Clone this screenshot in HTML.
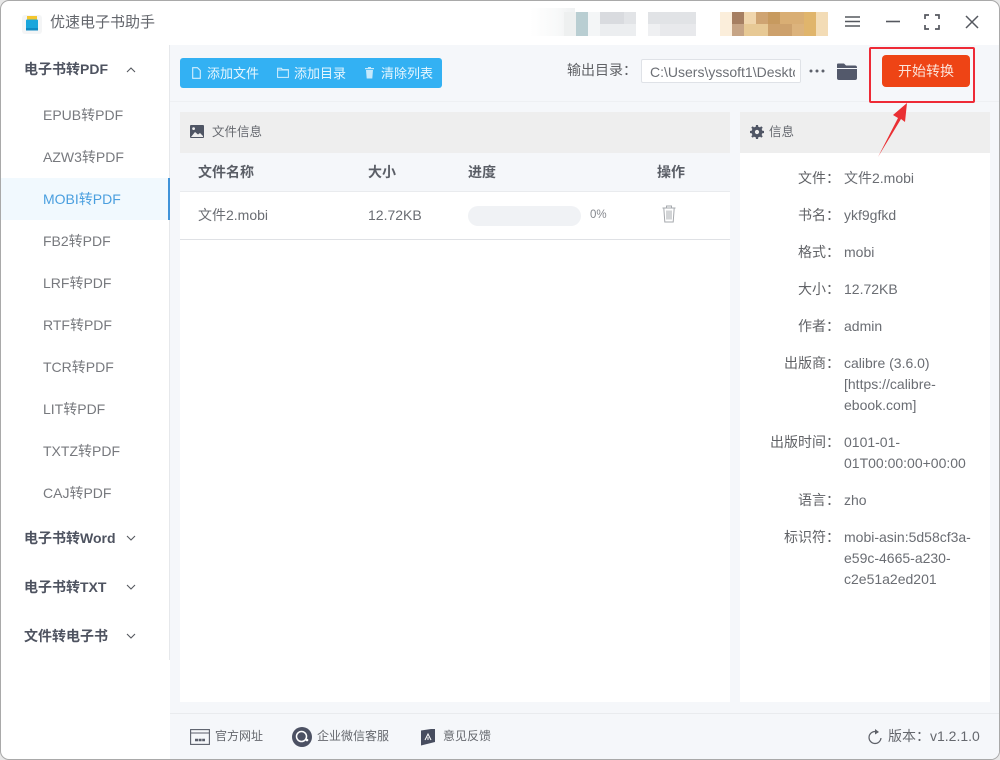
<!DOCTYPE html>
<html lang="zh">
<head>
<meta charset="utf-8">
<title>优速电子书助手</title>
<style>
*{box-sizing:border-box;margin:0;padding:0}
html,body{width:1000px;height:760px;overflow:hidden;background:#e8e8e8}
body{font-family:"Liberation Sans","Noto Sans CJK SC",sans-serif;color:#606266;position:relative}
.a{position:absolute;white-space:nowrap;line-height:1}
.win{position:absolute;left:0;top:0;width:1000px;height:760px;background:#fff;border:1px solid #a9a9a9;border-radius:9px;overflow:hidden}
.box{position:absolute}
.nav{font-size:14px;color:#77797e;left:43px}
.grp{font-size:14px;font-weight:bold;color:#4e5360;left:24px}
.th{font-size:14px;font-weight:bold;color:#5a5e66;top:165px}
.lab{font-size:14px;color:#606266;right:160px;text-align:right}
.val{font-size:14px;color:#6a6d73;left:844px}
svg{position:absolute;overflow:visible}
</style>
</head>
<body>
<div class="win"></div>

<!-- title bar -->
<svg style="left:22px;top:14px" width="20" height="20" viewBox="0 0 20 20">
<rect x="0" y="1" width="20" height="19" rx="3" fill="#f4f5f6"/>
<rect x="5" y="2" width="10" height="4" fill="#f4c62e"/>
<rect x="4" y="5.5" width="12" height="11" rx="1" fill="#1aa6dc"/>
<rect x="4" y="14" width="12" height="2.5" fill="#0f8bc4"/>
</svg>
<div class="a" style="left:50px;top:15px;font-size:15px;color:#63666c">优速电子书助手</div>

<!-- blurred mosaic -->
<div class="box" style="left:530px;top:8px;width:45px;height:28px;background:linear-gradient(90deg,#fff,#f8f9f9 60%,#eff1f2)"></div>
<div class="box" style="left:564px;top:12px;width:12px;height:24px;background:#eef0f0"></div>
<div class="box" style="left:576px;top:12px;width:12px;height:24px;background:#b9ced2"></div>
<div class="box" style="left:588px;top:12px;width:12px;height:24px;background:#f4f6f7"></div>
<div class="box" style="left:600px;top:12px;width:24px;height:12px;background:#d9dbdf"></div>
<div class="box" style="left:624px;top:12px;width:12px;height:12px;background:#e2e4e7"></div>
<div class="box" style="left:600px;top:24px;width:36px;height:12px;background:#eceef0"></div>
<div class="box" style="left:648px;top:12px;width:48px;height:12px;background:#e1e3e6"></div>
<div class="box" style="left:648px;top:24px;width:12px;height:12px;background:#eff0f2"></div>
<div class="box" style="left:660px;top:24px;width:36px;height:12px;background:#e8e9ec"></div>
<div class="box" style="left:720px;top:12px;width:108px;height:24px;background:#fbeedb"></div>
<div class="box" style="left:732px;top:12px;width:12px;height:12px;background:#a67f62"></div>
<div class="box" style="left:732px;top:24px;width:12px;height:12px;background:#c6a485"></div>
<div class="box" style="left:744px;top:12px;width:12px;height:24px;background:#f0d6ad"></div>
<div class="box" style="left:744px;top:24px;width:24px;height:12px;background:#e7c995"></div>
<div class="box" style="left:756px;top:12px;width:24px;height:12px;background:#cfa472"></div>
<div class="box" style="left:768px;top:12px;width:12px;height:12px;background:#c79a5f"></div>
<div class="box" style="left:768px;top:24px;width:24px;height:12px;background:#cda16c"></div>
<div class="box" style="left:780px;top:12px;width:24px;height:12px;background:#d9ae74"></div>
<div class="box" style="left:792px;top:24px;width:12px;height:12px;background:#dcb37c"></div>
<div class="box" style="left:804px;top:12px;width:12px;height:24px;background:#e0b56c"></div>
<div class="box" style="left:816px;top:12px;width:12px;height:24px;background:#f3dcb6"></div>

<!-- window buttons -->
<svg style="left:845px;top:16px" width="16" height="12"><path d="M0 1H15M0 5.5H15M0 10H15" stroke="#55585f" stroke-width="1.4" fill="none"/></svg>
<svg style="left:886px;top:16px" width="14" height="12"><path d="M0 5.5H14" stroke="#55585f" stroke-width="1.6" fill="none"/></svg>
<svg style="left:924px;top:14px" width="16" height="16"><path d="M1 5V1H5M11 1H15V5M15 11V15H11M5 15H1V11" stroke="#55585f" stroke-width="1.7" fill="none"/></svg>
<svg style="left:965px;top:15px" width="14" height="14"><path d="M1 1L13 13M13 1L1 13" stroke="#55585f" stroke-width="1.5" fill="none"/></svg>

<!-- main background -->
<div class="box" style="left:170px;top:45px;width:829px;height:714px;background:#f5f7fa;border-bottom-right-radius:8px"></div>
<div class="box" style="left:170px;top:101px;width:829px;height:1px;background:#eef0f3"></div>
<div class="box" style="left:169px;top:45px;width:1px;height:615px;background:#e6e8eb"></div>

<!-- sidebar -->
<div class="a grp" style="top:62px">电子书转PDF</div>
<svg style="left:126px;top:67px" width="10" height="6"><path d="M1 5L5 1L9 5" stroke="#55585f" fill="none" stroke-width="1.1"/></svg>
<div class="a nav" style="top:108px">EPUB转PDF</div>
<div class="a nav" style="top:150px">AZW3转PDF</div>
<div class="box" style="left:1px;top:178px;width:169px;height:42px;background:#f1f9fe;border-right:2px solid #3f93d9"></div>
<div class="a nav" style="top:192px;color:#4a9fdf">MOBI转PDF</div>
<div class="a nav" style="top:234px">FB2转PDF</div>
<div class="a nav" style="top:276px">LRF转PDF</div>
<div class="a nav" style="top:318px">RTF转PDF</div>
<div class="a nav" style="top:360px">TCR转PDF</div>
<div class="a nav" style="top:402px">LIT转PDF</div>
<div class="a nav" style="top:444px">TXTZ转PDF</div>
<div class="a nav" style="top:486px">CAJ转PDF</div>
<div class="a grp" style="top:531px">电子书转Word</div>
<svg style="left:126px;top:535px" width="10" height="6"><path d="M1 1L5 5L9 1" stroke="#55585f" fill="none" stroke-width="1.1"/></svg>
<div class="a grp" style="top:580px">电子书转TXT</div>
<svg style="left:126px;top:584px" width="10" height="6"><path d="M1 1L5 5L9 1" stroke="#55585f" fill="none" stroke-width="1.1"/></svg>
<div class="a grp" style="top:629px">文件转电子书</div>
<svg style="left:126px;top:633px" width="10" height="6"><path d="M1 1L5 5L9 1" stroke="#55585f" fill="none" stroke-width="1.1"/></svg>

<!-- toolbar -->
<div class="box" style="left:180px;top:58px;width:262px;height:30px;background:#33b1f3;border-radius:3px"></div>
<svg style="left:192px;top:67px" width="9" height="12"><path d="M.7.7H5.5L8.3 3.5V11.3H.7Z" stroke="#d5effd" fill="none" stroke-width="1.1"/></svg>
<div class="a" style="left:207px;top:67px;font-size:13px;color:#e6f6fe">添加文件</div>
<svg style="left:277px;top:67px" width="12" height="11"><path d="M.6 1.2H4.5L5.3 2.6H11.4V10.4H.6Z M.6 3H11" stroke="#d5effd" fill="none" stroke-width="1"/></svg>
<div class="a" style="left:294px;top:67px;font-size:13px;color:#e6f6fe">添加目录</div>
<svg style="left:365px;top:67px" width="9" height="12"><path d="M3 0H6V1H9V2.2H0V1H3ZM1 3H8L7.3 11.5H1.7Z" fill="#c5e9fc"/></svg>
<div class="a" style="left:381px;top:67px;font-size:13px;color:#e6f6fe">清除列表</div>

<div class="a" style="left:567px;top:63px;font-size:14px;color:#606266">输出目录：</div>
<div class="box" style="left:641px;top:59px;width:160px;height:24px;background:#fff;border:1px solid #dfe2e7;border-radius:2px;overflow:hidden">
<div class="a" style="left:8px;top:5px;font-size:14px;color:#6c6f75">C:\Users\yssoft1\Desktop</div>
<div class="box" style="right:0;top:0;width:5px;height:22px;background:#fff"></div>
</div>
<svg style="left:809px;top:69px" width="16" height="4"><circle cx="2" cy="2" r="1.5" fill="#5d616b"/><circle cx="8" cy="2" r="1.5" fill="#5d616b"/><circle cx="14" cy="2" r="1.5" fill="#5d616b"/></svg>
<svg style="left:837px;top:63px" width="20" height="17"><path d="M0 1.5Q0 .5 1 .5H7L9 2.5H18Q20 2.5 20 4.5V5H0Z" fill="#53596b"/><path d="M0 6H20V15Q20 17 18 17H2Q0 17 0 15Z" fill="#53596b"/></svg>

<div class="box" style="left:882px;top:55px;width:88px;height:32px;background:#ee4415;border-radius:4px"></div>
<div class="a" style="left:898px;top:64px;font-size:14px;color:#fbe3d9">开始转换</div>

<!-- left panel -->
<div class="box" style="left:180px;top:112px;width:550px;height:590px;background:#fff"></div>
<div class="box" style="left:180px;top:112px;width:550px;height:41px;background:#eeeeee"></div>
<div class="box" style="left:180px;top:153px;width:550px;height:39px;background:#f5f7fa;border-bottom:1px solid #e9ebee"></div>
<div class="box" style="left:180px;top:239px;width:550px;height:1px;background:#dfe1e5"></div>
<svg style="left:190px;top:125px" width="14" height="13"><rect width="14" height="13" rx="1" fill="#4f5564"/><path d="M1 12L5 7L8 9.5L10 8L13 11V12Z" fill="#eee"/><circle cx="3.6" cy="3.6" r="1.4" fill="#eee"/></svg>
<div class="a" style="left:212px;top:126px;font-size:12.5px;color:#66696f">文件信息</div>
<div class="a th" style="left:198px">文件名称</div>
<div class="a th" style="left:368px">大小</div>
<div class="a th" style="left:468px">进度</div>
<div class="a th" style="left:657px">操作</div>
<div class="a" style="left:198px;top:208px;font-size:14px;color:#6a6d73">文件2.mobi</div>
<div class="a" style="left:368px;top:208px;font-size:14px;color:#6a6d73">12.72KB</div>
<div class="box" style="left:468px;top:206px;width:113px;height:20px;background:#f0f2f5;border-radius:10px"></div>
<div class="a" style="left:590px;top:210px;font-size:11.5px;color:#85888e">0%</div>
<svg style="left:662px;top:205px" width="14" height="18" viewBox="0 0 14 18"><path d="M.5 3H13.5M4.5 3V1H9.5V3M1.8 3L2.8 17H11.2L12.2 3M5 5.5V14.5M7 5.5V14.5M9 5.5V14.5" stroke="#a5a8ad" fill="none" stroke-width="1"/></svg>

<!-- right panel -->
<div class="box" style="left:740px;top:112px;width:250px;height:590px;background:#fff"></div>
<div class="box" style="left:740px;top:112px;width:250px;height:41px;background:#eeeeee"></div>
<svg style="left:750px;top:125px" width="14" height="14" viewBox="0 0 14 14"><circle cx="7" cy="7" r="4" fill="none" stroke="#4f5564" stroke-width="3"/><path d="M7 0V14M0 7H14M2 2L12 12M12 2L2 12" stroke="#4f5564" stroke-width="2.2"/><circle cx="7" cy="7" r="2.1" fill="#eee"/></svg>
<div class="a" style="left:769px;top:126px;font-size:12.5px;color:#66696f">信息</div>

<div class="a lab" style="top:171px">文件：</div><div class="a val" style="top:171px">文件2.mobi</div>
<div class="a lab" style="top:208px">书名：</div><div class="a val" style="top:208px">ykf9gfkd</div>
<div class="a lab" style="top:245px">格式：</div><div class="a val" style="top:245px">mobi</div>
<div class="a lab" style="top:282px">大小：</div><div class="a val" style="top:282px">12.72KB</div>
<div class="a lab" style="top:319px">作者：</div><div class="a val" style="top:319px">admin</div>
<div class="a lab" style="top:356px">出版商：</div>
<div class="a val" style="top:356px">calibre (3.6.0)</div>
<div class="a val" style="top:377px">[https://calibre-</div>
<div class="a val" style="top:398px">ebook.com]</div>
<div class="a lab" style="top:435px">出版时间：</div>
<div class="a val" style="top:435px">0101-01-</div>
<div class="a val" style="top:456px">01T00:00:00+00:00</div>
<div class="a lab" style="top:493px">语言：</div><div class="a val" style="top:493px">zho</div>
<div class="a lab" style="top:530px">标识符：</div>
<div class="a val" style="top:530px">mobi-asin:5d58cf3a-</div>
<div class="a val" style="top:551px">e59c-4665-a230-</div>
<div class="a val" style="top:572px">c2e51a2ed201</div>

<!-- footer -->
<div class="box" style="left:170px;top:713px;width:829px;height:1px;background:#e9ebee"></div>
<svg style="left:190px;top:729px" width="20" height="16"><rect x=".6" y=".6" width="18.8" height="14.8" fill="none" stroke="#5a5e6a" stroke-width="1.1"/><path d="M.6 4H19.4" stroke="#5a5e6a"/><path d="M5 11H15" stroke="#5a5e6a" stroke-width="2.5" stroke-dasharray="3 .6"/></svg>
<div class="a" style="left:215px;top:730px;font-size:12px;color:#65686e">官方网址</div>
<svg style="left:292px;top:727px" width="20" height="20"><circle cx="10" cy="10" r="10" fill="#4c5163"/><circle cx="9.5" cy="9.5" r="5" fill="none" stroke="#fff" stroke-width="1.5"/><circle cx="15" cy="13" r="1.3" fill="#fff"/></svg>
<div class="a" style="left:317px;top:730px;font-size:12px;color:#65686e">企业微信客服</div>
<svg style="left:421px;top:729px" width="14" height="17"><path d="M0 1.5L10 0H14V13L0 16.5Z" fill="#474d5f"/><path d="M4 11L7 5L10 11M7 8V11" stroke="#fff" fill="none"/></svg>
<div class="a" style="left:443px;top:730px;font-size:12px;color:#65686e">意见反馈</div>
<svg style="left:867px;top:729px" width="15" height="16" viewBox="0 0 15 16"><path d="M8 2.5A6 6 0 1 0 14 9" stroke="#5d6068" fill="none" stroke-width="1.2"/><path d="M8 0L12 3L8 5.5Z" fill="#5d6068"/></svg>
<div class="a" style="left:888px;top:729px;font-size:14px;color:#65686e">版本：<span>v1.2.1.0</span></div>

<!-- annotation -->
<div class="box" style="left:869px;top:47px;width:106px;height:56px;border:2.5px solid #ee2a36;border-radius:2px"></div>
<svg style="left:870px;top:100px" width="45" height="62"><path d="M8 57L28 18L23 15L37 3L35 22L31 19Z" fill="#ea2f33"/></svg>
</body>
</html>
